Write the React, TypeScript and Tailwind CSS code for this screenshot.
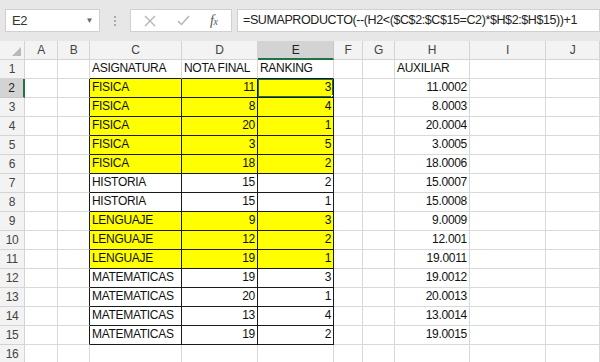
import React from 'react';

type Row = { n: number; c: string; d: number; e: number; h: string; y: boolean };

const rows: Row[] = [
  { n: 2, c: 'FISICA', d: 11, e: 3, h: '11.0002', y: true },
  { n: 3, c: 'FISICA', d: 8, e: 4, h: '8.0003', y: true },
  { n: 4, c: 'FISICA', d: 20, e: 1, h: '20.0004', y: true },
  { n: 5, c: 'FISICA', d: 3, e: 5, h: '3.0005', y: true },
  { n: 6, c: 'FISICA', d: 18, e: 2, h: '18.0006', y: true },
  { n: 7, c: 'HISTORIA', d: 15, e: 2, h: '15.0007', y: false },
  { n: 8, c: 'HISTORIA', d: 15, e: 1, h: '15.0008', y: false },
  { n: 9, c: 'LENGUAJE', d: 9, e: 3, h: '9.0009', y: true },
  { n: 10, c: 'LENGUAJE', d: 12, e: 2, h: '12.001', y: true },
  { n: 11, c: 'LENGUAJE', d: 19, e: 1, h: '19.0011', y: true },
  { n: 12, c: 'MATEMATICAS', d: 19, e: 3, h: '19.0012', y: false },
  { n: 13, c: 'MATEMATICAS', d: 20, e: 1, h: '20.0013', y: false },
  { n: 14, c: 'MATEMATICAS', d: 13, e: 4, h: '13.0014', y: false },
  { n: 15, c: 'MATEMATICAS', d: 19, e: 2, h: '19.0015', y: false },
];

const cols = ['A', 'B', 'C', 'D', 'E', 'F', 'G', 'H', 'I', 'J'];
const gridCols = 'grid grid-cols-[25px_33px_32px_92px_76px_76px_29px_32px_75px_76px_1fr]';

const cell = 'h-[19px] border-r border-b border-[#d9d9d9] px-[2px] flex items-end pb-[1px] whitespace-nowrap overflow-hidden';
const tcell = 'h-[19px] border-r border-b border-[#1a1a1a] px-[2px] flex items-end pb-[1px] whitespace-nowrap overflow-hidden';
const rowHead = 'h-[19px] border-r border-b border-[#d4d4d4] bg-[#f3f3f3] flex items-center justify-center text-[#444]';

export default function App() {
  return (
    <div className="w-[600px] h-[362px] overflow-hidden bg-white text-[12px] tracking-[-0.3px] text-[#111] font-['Liberation_Sans',Arial,sans-serif]">
      {/* formula bar */}
      <div className="h-[41px] bg-[#e7e7e7] flex items-start pt-[9px] pl-[5px] gap-0">
        <div className="w-[95px] h-[23px] bg-white border border-[#d0d0d0] flex items-center justify-between pl-[6px] pr-[6px] text-[13px] text-[#333]">
          <span>E2</span>
          <span className="text-[8px] text-[#666]">▼</span>
        </div>
        <div className="w-[30px] h-[23px] flex flex-col items-center justify-center gap-[2px]">
          <span className="w-[2px] h-[2px] bg-[#aaa]" />
          <span className="w-[2px] h-[2px] bg-[#aaa]" />
          <span className="w-[2px] h-[2px] bg-[#aaa]" />
        </div>
        <div className="w-[102px] h-[23px] bg-white border border-[#d0d0d0] flex items-center">
          <svg className="ml-[13px]" width="12" height="12" viewBox="0 0 12 12">
            <path d="M1 1L11 11M11 1L1 11" stroke="#b5b5b5" strokeWidth="1.4" />
          </svg>
          <svg className="ml-[21px]" width="13" height="11" viewBox="0 0 13 11">
            <path d="M1 6L4.5 9.5L12 1" stroke="#b5b5b5" strokeWidth="1.5" fill="none" />
          </svg>
          <span className="ml-[20px] italic text-[#555] text-[14px] font-['Liberation_Serif',serif]">
            f<span className="text-[10px]">x</span>
          </span>
        </div>
        <div className="ml-[5px] flex-1 h-[23px] bg-white border border-[#d0d0d0] flex items-center pl-[5px] text-[12.5px] tracking-[-0.4px] text-[#222] whitespace-nowrap overflow-hidden">
          =SUMAPRODUCTO(--(H2&lt;($C$2:$C$15=C2)*$H$2:$H$15))+1
        </div>
      </div>

      {/* column headers */}
      <div className={gridCols}>
        <div className="h-[19px] border-r border-b border-[#d4d4d4] bg-[#f3f3f3] relative">
          <div className="absolute right-[3px] bottom-[3px] w-0 h-0 border-l-[9px] border-l-transparent border-b-[9px] border-b-[#b8b8b8]" />
        </div>
        {cols.map((c) => (
          <div
            key={c}
            className={
              c === 'E'
                ? 'h-[19px] border-r border-[#c8c8c8] bg-[#d3d3d3] border-b-2 border-b-[#217346] flex items-center justify-center text-[#222]'
                : 'h-[19px] border-r border-b border-[#d4d4d4] bg-[#f3f3f3] flex items-center justify-center text-[#444]'
            }
          >
            {c}
          </div>
        ))}
      </div>

      {/* row 1 */}
      <div className={gridCols}>
        <div className={rowHead}>1</div>
        <div className={cell} />
        <div className={cell} />
        <div className={`${cell} border-b-[#1a1a1a]`}>ASIGNATURA</div>
        <div className={`${cell} border-b-[#1a1a1a]`}>NOTA FINAL</div>
        <div className={`${cell} border-b-[#1a1a1a]`}>RANKING</div>
        <div className={cell} />
        <div className={cell} />
        <div className={cell}>AUXILIAR</div>
        <div className={cell} />
        <div className={cell} />
      </div>

      {rows.map((r) => {
        const bg = r.y ? 'bg-[#ffff00]' : 'bg-white';
        const sel = r.n === 2;
        return (
          <div key={r.n} className={gridCols}>
            <div
              className={
                sel
                  ? 'h-[19px] border-b border-[#c8c8c8] bg-[#d3d3d3] border-r-2 border-r-[#217346] flex items-center justify-center text-[#222]'
                  : rowHead
              }
            >
              {r.n}
            </div>
            <div className={cell} />
            <div className={`${cell} border-r-[#1a1a1a]`} />
            <div className={`${tcell} ${bg}`}>{r.c}</div>
            <div className={`${tcell} ${bg} justify-end`}>{r.d}</div>
            <div className={`${tcell} ${bg} justify-end relative`}>
              {r.e}
              {sel && (
                <>
                  <div className="absolute -left-px -top-px right-[-1px] bottom-[-1px] border-2 border-[#217346]" />
                  <div className="absolute right-[-4px] bottom-[-4px] w-[6px] h-[6px] bg-[#217346] border border-white" />
                </>
              )}
            </div>
            <div className={cell} />
            <div className={cell} />
            <div className={`${cell} justify-end`}>{r.h}</div>
            <div className={cell} />
            <div className={cell} />
          </div>
        );
      })}

      {/* row 16 */}
      <div className={gridCols}>
        <div className={rowHead}>16</div>
        {cols.map((c) => (
          <div key={c} className={cell} />
        ))}
      </div>
    </div>
  );
}
